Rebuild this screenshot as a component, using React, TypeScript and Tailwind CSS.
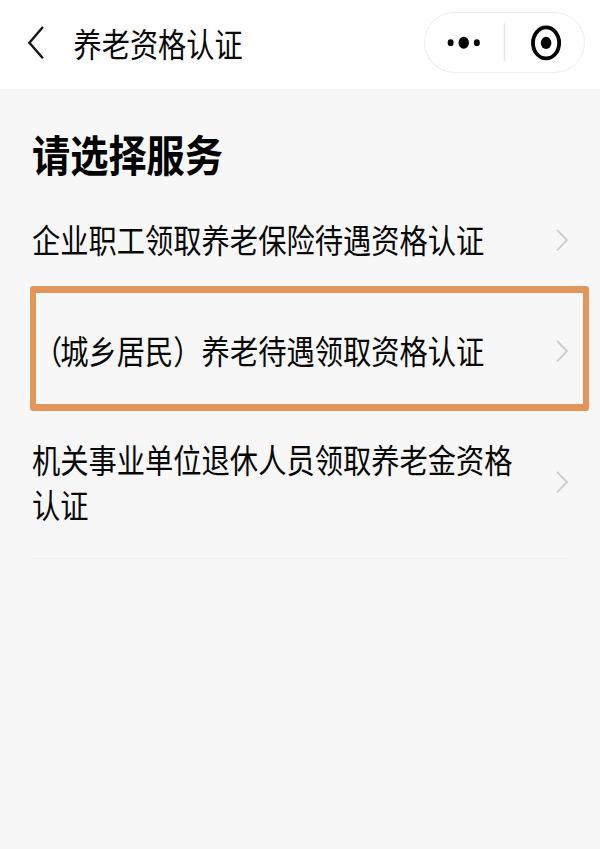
import React from "react";

const services = [
  { lines: ["企业职工领取养老保险待遇资格认证"], height: "h-[110px]", highlighted: false },
  { lines: ["（城乡居民）养老待遇领取资格认证"], height: "h-[111px]", highlighted: true },
  { lines: ["机关事业单位退休人员领取养老金资格", "认证"], height: "h-[152px]", highlighted: false },
];

function Chevron() {
  return (
    <svg className="mr-px h-6 w-3.5 shrink-0" viewBox="0 0 14 24" fill="none" stroke="#cbcbcb" strokeWidth="1.8">
      <path d="M3 1.8L13 12.1L3 22.3" />
    </svg>
  );
}

function Header() {
  return (
    <header className="flex h-[89px] items-start bg-white">
      <svg className="ml-[26px] mt-6 h-9 w-5" viewBox="0 0 20 36" fill="none" stroke="#151515" strokeWidth="2.4">
        <path d="M16.9 3L3.4 18.7L16.9 34.2" />
      </svg>
      <h1 className="ml-[27.5px] mt-[23px] scale-y-[1.17] text-[28.2px] leading-10">养老资格认证</h1>
      <div className="ml-auto mr-[15px] mt-3 flex h-[61px] w-[161px] items-center rounded-full border-[1.5px] border-[#ededed]">
        <svg className="h-full w-full" viewBox="0 0 158 58">
          <ellipse cx="25.5" cy="29.2" rx="3" ry="3.4" />
          <ellipse cx="38.5" cy="29.2" rx="5.2" ry="5.9" />
          <ellipse cx="51.5" cy="29.2" rx="3" ry="3.4" />
          <path d="M79 10V48" stroke="#e8e8e8" strokeWidth="1.5" />
          <ellipse cx="120.3" cy="29.4" rx="13" ry="15.4" fill="none" stroke="#000" strokeWidth="3.8" />
          <ellipse cx="120.3" cy="29.4" rx="5.3" ry="6" />
        </svg>
      </div>
    </header>
  );
}

export default function App() {
  return (
    <div
      lang="zh-CN"
      className="flex h-[849px] w-[600px] flex-col overflow-hidden bg-[#f7f7f7] font-['Noto_Sans_CJK_SC',sans-serif] text-[#080808] [text-spacing-trim:space-all]"
    >
      <Header />
      <main className="pl-8 pr-[31px] pt-10">
        <h2 className="origin-center scale-y-[1.14] text-[38.2px] font-bold leading-[50px] text-black">请选择服务</h2>
        <ul className="mt-1.5 border-b border-[#efefef]">
          {services.map((s) => (
            <li key={s.lines[0]} className={`relative flex items-center justify-between ${s.height}`}>
              <div className="mb-px scale-y-[1.17] whitespace-nowrap text-[28.28px] leading-[38.5px]">
                {s.lines.map((line) => (
                  <p key={line}>
                    {line.startsWith("（") ? (
                      <>
                        <span className="relative left-[2px]">（</span>
                        {line.slice(1)}
                      </>
                    ) : (
                      line
                    )}
                  </p>
                ))}
              </div>
              <Chevron />
              {s.highlighted && (
                <div className="pointer-events-none absolute -left-0.5 -right-5 -top-[9px] h-[125px] rounded-[3px] border-x-[6px] border-y-[7px] border-[#e39659]" />
              )}
            </li>
          ))}
        </ul>
      </main>
    </div>
  );
}
